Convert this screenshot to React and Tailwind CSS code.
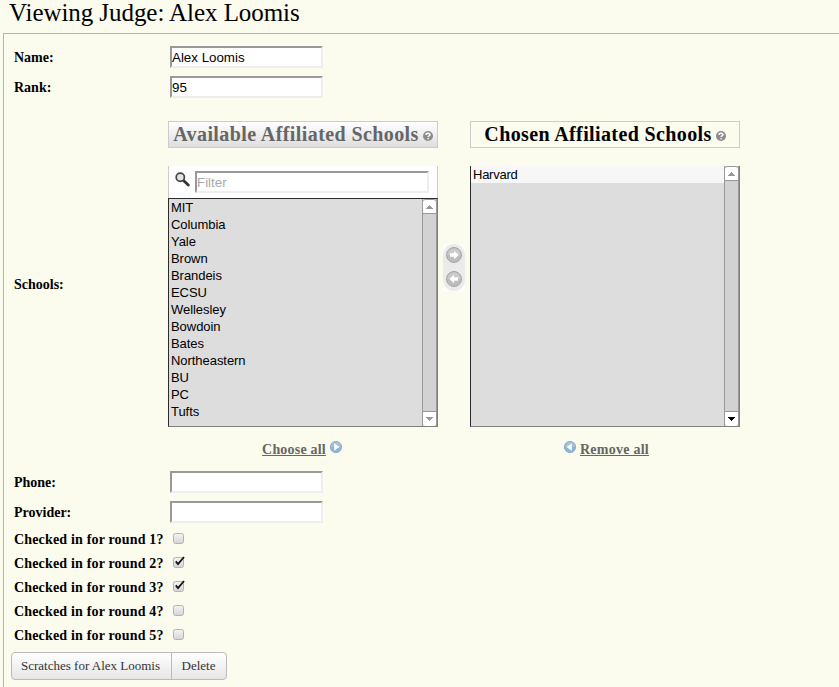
import React from "react";

const available = ["MIT", "Columbia", "Yale", "Brown", "Brandeis", "ECSU", "Wellesley", "Bowdoin", "Bates", "Northeastern", "BU", "PC", "Tufts"];

const rounds = [
  { label: "Checked in for round 1?", checked: false },
  { label: "Checked in for round 2?", checked: true },
  { label: "Checked in for round 3?", checked: true },
  { label: "Checked in for round 4?", checked: false },
  { label: "Checked in for round 5?", checked: false },
];

const sans = "font-['Liberation_Sans',Arial,sans-serif]";

function Field({ label, value }) {
  return (
    <div className="flex h-[30px] items-center">
      <label className="w-[156px] shrink-0 pt-px text-[14px] leading-5 font-bold">{label}</label>
      <div className={`h-[22px] w-[153px] border-2 border-t-[#999] border-l-[#999] border-r-[#eee] border-b-[#eee] bg-white text-[13.33px] leading-[19px] whitespace-nowrap ${sans}`}>
        {value}
      </div>
    </div>
  );
}

function HelpIcon() {
  return (
    <svg width="10" height="10" viewBox="0 0 10 10" className="mt-[3px] shrink-0">
      <circle cx="5" cy="5" r="5" fill="#8c8c8c" />
      <path d="M3 3.9C3 1.8 7 1.8 7 3.8C7 5 5.1 4.9 5.1 6.1" fill="none" stroke="#fff" strokeWidth="1.4" />
      <rect x="4.4" y="7" width="1.5" height="1.3" fill="#fff" />
    </svg>
  );
}

function ScrollButton({ down, dark }) {
  return (
    <div className={`flex h-[15px] items-center justify-center border-[#999] bg-white ${down ? "rounded-b-[3px] border-t" : "rounded-t-[3px] border-t border-b"}`}>
      <svg width="7" height="4" viewBox="0 0 7 4" shapeRendering="crispEdges">
        <path d={down ? "M0 0H7L3.5 4Z" : "M0 4H7L3.5 0Z"} fill={dark ? "#000" : "#999"} />
      </svg>
    </div>
  );
}

function Scrollbar({ dark }) {
  return (
    <div className="flex w-[15px] shrink-0 flex-col justify-between border-x border-[#999] bg-[#d2d2d2]">
      <ScrollButton />
      <ScrollButton down dark={dark} />
    </div>
  );
}

function RoundArrow({ left }) {
  return (
    <svg width="16" height="16" viewBox="0 0 16 16">
      <circle cx="8" cy="8" r="7.5" fill="#bdbdbd" stroke="#a6a6a6" />
      <path d="M1.5 8A6.5 6.5 0 0 1 14.5 8Z" fill="#cacaca" />
      <path d={left ? "M3.3 8L8 3.8V6.2H12V9.8H8V12.2Z" : "M12.7 8L8 3.8V6.2H4V9.8H8V12.2Z"} fill="#fff" />
    </svg>
  );
}

function BlueArrow({ left }) {
  return (
    <svg width="12" height="12" viewBox="0 0 12 12" className="mb-[4px]">
      <circle cx="6" cy="6" r="5.6" fill="#8fb4d9" stroke="#7ba2ca" strokeWidth="0.8" />
      <path d="M1 6A5 5 0 0 1 11 6Z" fill="#a2c1e0" />
      <path d={left ? "M7.8 2.2V9.8L2.5 6Z" : "M4.2 2.2V9.8L9.5 6Z"} fill="#fff" />
    </svg>
  );
}

function Check({ label, checked }) {
  return (
    <div className="flex h-6 items-center">
      <label className="w-[159px] shrink-0 pt-px text-[14px] leading-5 font-bold tracking-[0.17px] whitespace-nowrap">{label}</label>
      <svg width="14" height="14" viewBox="0 0 14 14" className="-mt-[3px]">
        <defs>
          <linearGradient id="box" x1="0" y1="0" x2="0" y2="1">
            <stop offset="0" stopColor="#f6f6f6" />
            <stop offset="1" stopColor="#d4d4d4" />
          </linearGradient>
        </defs>
        <rect x="0.5" y="2.5" width="10" height="10" rx="2" fill="url(#box)" stroke="#b2b2b2" />
        {checked && <path d="M2.8 6.4L5 9L11 2" fill="none" stroke="#111" strokeWidth="1.8" />}
      </svg>
    </div>
  );
}

export default function App() {
  return (
    <div className="h-[687px] w-full overflow-hidden bg-[#fbfbee] font-['Liberation_Serif','Times_New_Roman',serif] text-black">
      <h1 className="h-[33px] pl-[9px] text-[25px] leading-[26px] tracking-[-0.06px] whitespace-nowrap">Viewing Judge: Alex Loomis</h1>
      <div className="ml-[3px] h-[654px] border-t border-l border-[#b5b5ad] pt-2 pl-[10px]">
        <Field label="Name:" value="Alex Loomis" />
        <Field label="Rank:" value="95" />

        <div className="flex h-[365px] items-center">
          <label className="w-[154px] shrink-0 text-[14px] leading-5 font-bold">Schools:</label>

          <div className="flex h-full w-[270px] shrink-0 flex-col pt-[19px]">
            <h2 className="flex h-[27px] items-center justify-center gap-[4px] border border-[#ccc] bg-linear-to-b from-white to-[#dedede] text-[20px] font-bold whitespace-nowrap text-[#666]">
              <span className="-mt-[2px] tracking-[0.41px]">Available Affiliated Schools</span>
              <HelpIcon />
            </h2>
            <div className="mt-[18px] flex h-8 items-center border-x border-[#ccc] bg-white pr-2 pl-[6px]">
              <svg width="15" height="15" viewBox="0 0 15 15" className="mr-[5px] -mt-[5px]">
                <path d="M8.5 8.5L13.3 13" stroke="#333" strokeWidth="2.8" strokeLinecap="round" />
                <circle cx="5.3" cy="5.3" r="4.1" fill="#e4e4e4" stroke="#444" strokeWidth="1.7" />
              </svg>
              <div className={`h-[22px] flex-1 border-2 border-t-[#999] border-l-[#999] border-r-[#eee] border-b-[#eee] bg-white text-[13.33px] leading-[19px] text-[#a9a9a9] ${sans}`}>
                Filter
              </div>
            </div>
            <div className="flex h-[229px] border border-t-[#2c2c2c] border-r-[#808080] border-b-[#808080] border-l-[#2c2c2c] bg-[#ddd]">
              <ul className={`flex-1 pl-[2px] text-[13px] leading-[17px] tracking-[-0.05px] ${sans}`}>
                {available.map((school) => (
                  <li key={school}>{school}</li>
                ))}
              </ul>
              <Scrollbar />
            </div>
            <a className="mt-[13px] flex h-[18px] items-center justify-center gap-1 pr-[2px] text-[14px] font-bold text-[#666]">
              <span className="tracking-[0.2px] underline">Choose all</span>
              <BlueArrow />
            </a>
          </div>

          <div className="mx-[5px] -mt-[34px] flex h-[47px] w-[22px] shrink-0 flex-col items-center justify-center bg-[#fdfdfd]">
            <div className="flex h-full w-full flex-col items-center justify-center gap-2 rounded-[11px] bg-[#ebebeb] pb-[2px]">
              <RoundArrow />
              <RoundArrow left />
            </div>
          </div>

          <div className="flex h-full w-[270px] shrink-0 flex-col pt-[19px]">
            <h2 className="flex h-[27px] items-center justify-center gap-[4px] border border-[#ccc] text-[20px] font-bold whitespace-nowrap">
              <span className="-mt-[2px] tracking-[0.38px]">Chosen Affiliated Schools</span>
              <HelpIcon />
            </h2>
            <div className="mt-[18px] flex h-[261px] border-r border-b border-l border-r-[#808080] border-b-[#808080] border-l-[#2c2c2c] bg-[#ddd]">
              <ul className={`flex-1 text-[13px] leading-[17px] tracking-[-0.25px] ${sans}`}>
                <li className="bg-[#f7f7f7] pl-[2px]">Harvard</li>
              </ul>
              <Scrollbar dark />
            </div>
            <a className="mt-[13px] flex h-[18px] items-center justify-center gap-1 pl-[3px] text-[14px] font-bold text-[#666]">
              <BlueArrow left />
              <span className="tracking-[0.25px] underline">Remove all</span>
            </a>
          </div>
        </div>

        <Field label="Phone:" />
        <Field label="Provider:" />
        {rounds.map((round) => (
          <Check key={round.label} label={round.label} checked={round.checked} />
        ))}

        <div className="mt-[5px] -ml-[3px] flex h-7 w-[216px] rounded-[4px] border border-[#bbb] bg-linear-to-b from-white to-[#e6e6e6] text-[13px] leading-[26px] whitespace-nowrap text-[#333]">
          <button className="w-[160px] border-r border-[#bbb] pr-[2px]">Scratches for Alex Loomis</button>
          <button className="flex-1 pr-px">Delete</button>
        </div>
      </div>
    </div>
  );
}
